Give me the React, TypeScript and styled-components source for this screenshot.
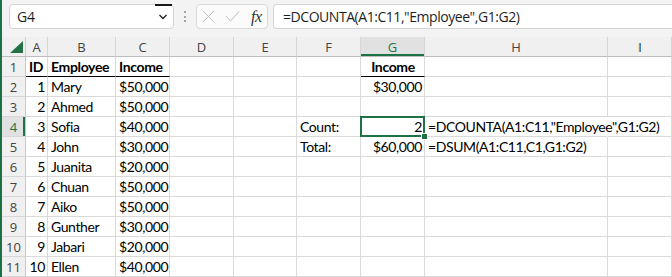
import React from 'react'
import styled, { createGlobalStyle, css } from 'styled-components'

const GREEN = '#1e7145'

const GlobalStyle = createGlobalStyle`
  html, body {
    margin: 0;
    padding: 0;
    background: #ffffff;
  }
  body {
    width: 672px;
    height: 277px;
    overflow: hidden;
  }
`

const Window = styled.div`
  width: 672px;
  height: 277px;
  box-sizing: border-box;
  border-left: 2px solid ${GREEN};
  overflow: hidden;
  background: #ffffff;
`

const Toolbar = styled.div`
  height: 37px;
  box-sizing: border-box;
  display: flex;
  align-items: flex-start;
  padding: 4px 0 0 7px;
  background: #f3f3f3;
  font-family: 'Open Sans', 'Noto Sans', sans-serif;
`

const NameBox = styled.div`
  position: relative;
  width: 165px;
  height: 25px;
  box-sizing: border-box;
  display: flex;
  align-items: center;
  justify-content: space-between;
  padding: 0 5px 0 7px;
  background: #ffffff;
  border: 1px solid #d4d4d4;
  border-radius: 4px;
  font-size: 14px;
  letter-spacing: -0.3px;
  color: #1f1f1f;
  &::before {
    content: '';
    position: absolute;
    top: -1px;
    right: 1px;
    width: 17px;
    height: 2px;
    background: #1a1a1a;
  }
`

const Dots = styled.div`
  width: 22px;
  height: 25px;
  display: flex;
  flex-direction: column;
  align-items: center;
  justify-content: center;
  gap: 2.5px;
  span {
    width: 2px;
    height: 2px;
    border-radius: 1px;
    background: #8c8c8c;
  }
`

const FxBox = styled.div`
  width: 72px;
  height: 25px;
  box-sizing: border-box;
  display: flex;
  align-items: center;
  padding: 0 0 0 5px;
  gap: 10px;
  background: #fbfbfb;
  border: 1px solid #dadada;
  border-radius: 4px;
`

const FxLabel = styled.span`
  font-family: 'Liberation Serif', serif;
  font-style: italic;
  font-size: 16px;
  color: #333333;
  margin-left: 1px;
  letter-spacing: -0.5px;
`

const FormulaBox = styled.div`
  flex: 1;
  height: 25px;
  box-sizing: border-box;
  margin-left: 5px;
  display: flex;
  align-items: center;
  padding-left: 9px;
  background: #ffffff;
  border: 1px solid #d4d4d4;
  border-right: none;
  border-radius: 4px 0 0 4px;
  font-size: 14px;
  letter-spacing: -0.45px;
  color: #1f1f1f;
  white-space: nowrap;
`

const Sheet = styled.div`
  display: grid;
  grid-template-columns: 24px 22px 68px 54px 64px 63px 64px 64px 183px 64px;
  grid-auto-rows: 20px;
`

const Corner = styled.div`
  background: #f0f0f0;
  border-right: 1px solid #d0d0d0;
  border-bottom: 1px solid #bdbdbd;
  display: flex;
  align-items: flex-end;
  justify-content: flex-end;
  padding: 0 2px 3px 0;
`

const ColHead = styled.div<{ $active?: boolean }>`
  position: relative;
  background: #f0f0f0;
  border-right: 1px solid #d6d6d6;
  border-bottom: 1px solid #bdbdbd;
  display: flex;
  align-items: center;
  justify-content: center;
  font-family: 'Open Sans', 'Noto Sans', sans-serif;
  font-size: 13px;
  color: #444444;
  padding-top: 1px;
  ${({ $active }) =>
    $active &&
    css`
      background: #e1e1e1;
      color: ${GREEN};
      box-shadow: inset 0 -2px 0 ${GREEN};
    `}
`

const TextCursor = styled.span`
  position: absolute;
  left: 31px;
  top: 6px;
  width: 2px;
  height: 9px;
  background: linear-gradient(to right, #c8864a 50%, #3f7fc6 50%);
`

const RowHead = styled.div<{ $active?: boolean }>`
  background: #f0f0f0;
  border-right: 1px solid #c8c8c8;
  border-bottom: 1px solid #d6d6d6;
  display: flex;
  align-items: center;
  justify-content: center;
  font-family: 'Open Sans', 'Noto Sans', sans-serif;
  font-size: 13px;
  color: #444444;
  ${({ $active }) =>
    $active &&
    css`
      background: #e1e1e1;
      color: ${GREEN};
      box-shadow: inset -2px 0 0 ${GREEN};
    `}
`

type Align = 'left' | 'right' | 'center'

const Cell = styled.div<{
  $align?: Align
  $bold?: boolean
  $underline?: boolean
  $spill?: boolean
  $selected?: boolean
}>`
  position: relative;
  box-sizing: border-box;
  border-right: 1px solid ${({ $spill }) => ($spill ? 'transparent' : '#dadada')};
  border-bottom: 1px solid ${({ $underline }) => ($underline ? '#000000' : '#dadada')};
  padding: 1px 2px 0 3px;
  font-family: Lato, 'Liberation Sans', sans-serif;
  font-size: 14px;
  letter-spacing: ${({ $bold }) => ($bold ? '-0.35px' : '-0.4px')};
  line-height: 18px;
  font-weight: ${({ $bold }) => ($bold ? 700 : 400)};
  color: #000000;
  text-align: ${({ $align }) => $align || 'left'};
  white-space: nowrap;
  overflow: ${({ $spill }) => ($spill ? 'visible' : 'hidden')};
  z-index: ${({ $spill }) => ($spill ? 1 : 0)};
  ${({ $selected }) =>
    $selected &&
    css`
      overflow: visible;
      z-index: 2;
      &::after {
        content: '';
        position: absolute;
        left: -1px;
        top: -1px;
        right: -1px;
        bottom: -1px;
        border: 2px solid ${GREEN};
      }
      &::before {
        content: '';
        position: absolute;
        right: -4px;
        bottom: -4px;
        width: 5px;
        height: 5px;
        background: ${GREEN};
        border: 1px solid #ffffff;
        z-index: 3;
      }
    `}
`

const CornerMark = () => (
  <svg width="13" height="12" viewBox="0 0 13 12">
    <polygon points="13,0 13,12 0,12" fill="#217346" />
  </svg>
)

const ChevronDown = () => (
  <svg width="10" height="6" viewBox="0 0 10 6">
    <polyline points="1.5,1 5,4.5 8.5,1" fill="none" stroke="#222" strokeWidth="1.4" />
  </svg>
)

const CancelIcon = () => (
  <svg width="13" height="13" viewBox="0 0 13 13">
    <path d="M1 1 L12 12 M12 1 L1 12" stroke="#bcbcbc" strokeWidth="1" fill="none" />
  </svg>
)

const EnterIcon = () => (
  <svg width="15" height="11" viewBox="0 0 15 11">
    <polyline points="1,5 5.5,10 14,0.5" stroke="#bcbcbc" strokeWidth="1" fill="none" />
  </svg>
)

type CellSpec = {
  v?: string
  align?: Align
  bold?: boolean
  underline?: boolean
  spill?: boolean
  selected?: boolean
}

const columns = ['A', 'B', 'C', 'D', 'E', 'F', 'G', 'H', 'I']

const people: [string, string, string][] = [
  ['1', 'Mary', '$50,000'],
  ['2', 'Ahmed', '$50,000'],
  ['3', 'Sofia', '$40,000'],
  ['4', 'John', '$30,000'],
  ['5', 'Juanita', '$20,000'],
  ['6', 'Chuan', '$50,000'],
  ['7', 'Aiko', '$50,000'],
  ['8', 'Gunther', '$30,000'],
  ['9', 'Jabari', '$20,000'],
  ['10', 'Ellen', '$40,000'],
]

const buildRows = (): CellSpec[][] => {
  const rows: CellSpec[][] = []
  rows.push([
    { v: 'ID', bold: true, underline: true },
    { v: 'Employee', bold: true, underline: true },
    { v: 'Income', bold: true, underline: true },
    {},
    {},
    {},
    { v: 'Income', bold: true, underline: true, align: 'center' },
    {},
    {},
  ])
  people.forEach(([id, name, income]) => {
    rows.push([
      { v: id, align: 'right' },
      { v: name },
      { v: income, align: 'right' },
      {},
      {},
      {},
      {},
      {},
      {},
    ])
  })
  rows[1][6] = { v: '$30,000', align: 'right' }
  rows[3][5] = { v: 'Count:' }
  rows[3][6] = { v: '2', align: 'right', selected: true }
  rows[3][7] = { v: '=DCOUNTA(A1:C11,"Employee",G1:G2)', spill: true }
  rows[4][5] = { v: 'Total:' }
  rows[4][6] = { v: '$60,000', align: 'right' }
  rows[4][7] = { v: '=DSUM(A1:C11,C1,G1:G2)' }
  return rows
}

const rows = buildRows()

export default function App() {
  return (
    <>
      <GlobalStyle />
      <Window>
        <Toolbar>
          <NameBox>
            <span>G4</span>
            <ChevronDown />
          </NameBox>
          <Dots>
            <span />
            <span />
            <span />
          </Dots>
          <FxBox>
            <CancelIcon />
            <EnterIcon />
            <FxLabel>fx</FxLabel>
          </FxBox>
          <FormulaBox>=DCOUNTA(A1:C11,"Employee",G1:G2)</FormulaBox>
        </Toolbar>
        <Sheet>
          <Corner>
            <CornerMark />
          </Corner>
          {columns.map((c) => (
            <ColHead key={c} $active={c === 'G'}>
              {c}
              {c === 'I' && <TextCursor />}
            </ColHead>
          ))}
          {rows.map((row, r) => (
            <React.Fragment key={r}>
              <RowHead $active={r === 3}>{r + 1}</RowHead>
              {row.map((cell, c) => (
                <Cell
                  key={c}
                  $align={cell.align}
                  $bold={cell.bold}
                  $underline={cell.underline}
                  $spill={cell.spill}
                  $selected={cell.selected}
                >
                  {cell.v}
                </Cell>
              ))}
            </React.Fragment>
          ))}
        </Sheet>
      </Window>
    </>
  )
}
